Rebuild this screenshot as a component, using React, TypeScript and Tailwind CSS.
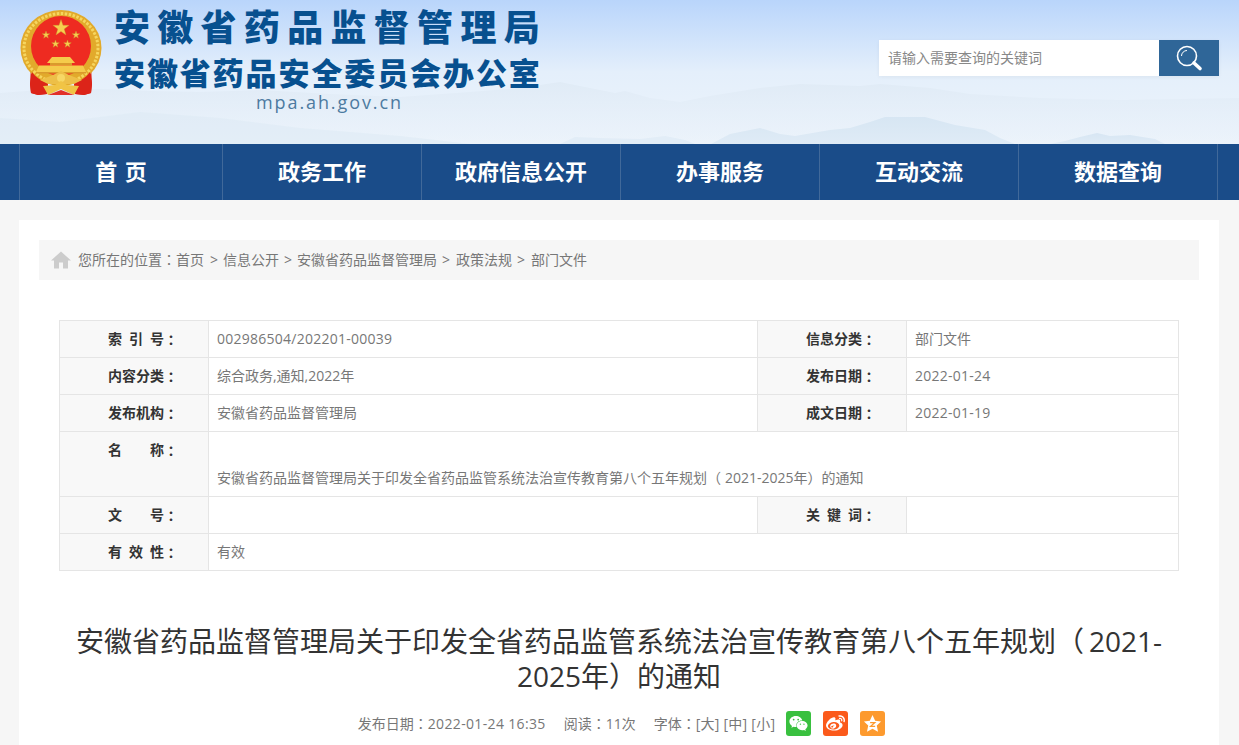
import React from 'react';
import { FaWeibo, FaWeixin } from 'react-icons/fa';

const NAV_ITEMS = [
  { label: '首 页', width: 'w-[203px]' },
  { label: '政务工作', width: 'w-[199px]' },
  { label: '政府信息公开', width: 'w-[199px]' },
  { label: '办事服务', width: 'w-[199px]' },
  { label: '互动交流', width: 'w-[199px]' },
  { label: '数据查询', width: 'w-[199px]' },
];

// full-width colon sits centered in its cell in the reference, TC glyph does that
function Colon() {
  return <span className='[font-family:"Noto_Sans_CJK_TC",sans-serif]'>：</span>;
}

function Star({ cx, cy, r }: { cx: number; cy: number; r: number }) {
  const pts: string[] = [];
  for (let i = 0; i < 10; i++) {
    const rad = i % 2 === 0 ? r : r * 0.4;
    const a = (Math.PI / 5) * i - Math.PI / 2;
    pts.push(`${cx + rad * Math.cos(a)},${cy + rad * Math.sin(a)}`);
  }
  return <polygon points={pts.join(' ')} fill="#f7cf4f" stroke="#c9962a" strokeWidth="0.4" />;
}

// National emblem, simplified
function Emblem() {
  return (
    <svg width="82" height="86" viewBox="0 0 82 86" className="shrink-0">
      {/* drapes */}
      <path d="M11 56 C14 64 20 68 28 71 L27 84 L18 85 L11 83 L10 74 Z" fill="#dc2419" />
      <path d="M71 56 C68 64 62 68 54 71 L55 84 L64 85 L71 83 L72 74 Z" fill="#dc2419" />
      <ellipse cx="41" cy="38" rx="40.5" ry="38" fill="#e2aa2b" />
      <ellipse cx="41" cy="38" rx="37" ry="34.5" fill="none" stroke="#f6d65f" strokeWidth="3" strokeDasharray="2.5 1.5" />
      <ellipse cx="41" cy="36" rx="30" ry="30" fill="#ee2b21" />
      <path d="M12 62 C16 68 22 71 28 73 L27 84 L18 85 L11 83 L10 74 Z" fill="#dc2419" />
      <path d="M70 62 C66 68 60 71 54 73 L55 84 L64 85 L71 83 L72 74 Z" fill="#dc2419" />
      {/* gate */}
      <path d="M32 47 L50 47 L55 53 L27 53 Z" fill="#f5cb4b" />
      <rect x="30" y="53" width="22" height="2.5" fill="#d99b2c" />
      <path d="M19 55.5 L63 55.5 L66 62 L16 62 Z" fill="#f5cb4b" />
      <rect x="16" y="62" width="50" height="1.5" fill="#d99b2c" />
      {/* knot and ribbon fan */}
      <path d="M20 70 L33 65 L41 61 L49 65 L62 70 L54 74 L28 74 Z" fill="#edbf48" />
      <circle cx="41" cy="68" r="4" fill="#f7d765" />
      <path d="M23 76 L35 75 L41 71 L47 75 L59 76 L54 85 L41 79 L28 85 Z" fill="#f1c445" />
      <path d="M28 85 L41 80 L54 85 Z" fill="#e2312a" />
      <Star cx={41} cy={18} r={8.5} />
      <Star cx={26} cy={25} r={4} />
      <Star cx={56} cy={25} r={4} />
      <Star cx={35.5} cy={34} r={4} />
      <Star cx={47.5} cy={34} r={4} />
    </svg>
  );
}

function Mountains() {
  return (
    <svg width="1239" height="144" viewBox="0 0 1239 144" className="absolute inset-0 pointer-events-none">
      <defs>
        <linearGradient id="far" x1="0" y1="0" x2="0" y2="1">
          <stop offset="0" stopColor="#e0ebf6" />
          <stop offset="1" stopColor="#e9f1fa" stopOpacity="0.3" />
        </linearGradient>
        <linearGradient id="near" x1="0" y1="0" x2="0" y2="1">
          <stop offset="0" stopColor="#d7e6f3" />
          <stop offset="1" stopColor="#dfebf6" />
        </linearGradient>
      </defs>
      <path
        d="M0 93 L40 90 L100 89 L150 91 L200 92 L260 90 L330 94 L400 97 L470 92 L520 88 L560 82 L590 88 L615 93 L625 91 L650 98 L680 102 L710 96 L760 88 L800 84 L860 86 L880 84 L930 88 L970 94 L1040 98 L1120 100 L1239 98 L1239 144 L0 144 Z"
        fill="url(#far)"
      />
      <path d="M0 118 L60 122 L140 112 L220 118 L300 128 L400 136 L470 144 L0 144 Z" fill="#dce9f4" fillOpacity="0.55" />
      <path d="M560 144 L575 137 L600 138 L640 139 L665 136 L685 140 L695 144 Z" fill="#e2edf7" />
      <path
        d="M711 144 L730 134 L760 128 L780 134 L795 136 L830 130 L850 128 L870 122 L885 117 L925 117 L955 125 L985 130 L1000 138 L1015 144 Z"
        fill="url(#near)"
      />
      <path d="M1050 144 L1065 141 L1080 137 L1097 133 L1110 136 L1130 135 L1155 139 L1165 144 Z" fill="url(#near)" />
    </svg>
  );
}

function Header() {
  return (
    <header className="relative h-[144px] bg-gradient-to-b from-[#b9d5fb] via-[#e4effb] to-[#edf4fb] overflow-hidden">
      <Mountains />
      <div className="relative flex justify-between pl-[20px] pr-[20px]">
        <div className="flex items-start pt-[10px]">
          <Emblem />
          <div className="ml-[12px] -mt-[2px] flex flex-col items-start text-[#07508f]">
            <div className="h-[40px] text-[36px] leading-[40px] font-black tracking-[7.3px] whitespace-nowrap">
              安徽省药品监督管理局
            </div>
            <div className="mt-[6px] h-[38px] text-[31px] leading-[38px] font-black tracking-[1.9px] whitespace-nowrap">
              安徽省药品安全委员会办公室
            </div>
            <div className="-mt-[2px] ml-[142px] text-[18px] leading-[24px] tracking-[1.9px] text-[#4c7aa0]">
              mpa.ah.gov.cn
            </div>
          </div>
        </div>
        <div className="flex h-[36px] mt-[40px] shadow-[0_1px_4px_rgba(0,0,0,0.05)]">
          <div className="w-[280px] bg-white pl-[9px] text-[14px] leading-[35px] text-[#888888]">
            请输入需要查询的关键词
          </div>
          <div className="w-[60px] bg-[#2f6698] flex items-center justify-center">
            <svg width="28" height="28" viewBox="0 0 28 28" fill="none">
              <circle cx="12" cy="12" r="9.5" stroke="#fff" strokeWidth="1.6" />
              <path d="M6.5 12a5.5 5.5 0 0 1 5.5-5.5" stroke="#fff" strokeWidth="1" />
              <path d="M19 19 L25 24.5" stroke="#fff" strokeWidth="3.6" strokeLinecap="round" />
            </svg>
          </div>
        </div>
      </div>
    </header>
  );
}

function Nav() {
  return (
    <nav className="h-[56px] bg-[#1a4c89] pl-[19px]">
      <div className="flex h-full w-[1199px] border-r border-[#41699a]">
        {NAV_ITEMS.map((item) => (
          <div
            key={item.label}
            className={`${item.width} border-l border-[#41699a] text-center text-[22px] leading-[54px] font-bold text-white whitespace-pre [word-spacing:2px]`}
          >
            {item.label}
          </div>
        ))}
      </div>
    </nav>
  );
}

function Breadcrumb() {
  return (
    <div className="h-[40px] bg-[#f6f6f6] flex items-center pl-[12px] pb-[2px] text-[14px] text-[#777777]">
      <svg width="20" height="18" viewBox="0 0 20 18" className="mr-[7px] mt-[2px]">
        <path d="M10 0.5 L20 9.5 L17 9.5 L17 17.5 L12 17.5 L12 11.5 L8 11.5 L8 17.5 L3 17.5 L3 9.5 L0 9.5 Z" fill="#cccccc" />
      </svg>
      <span>
        您所在的位置
        <Colon />
        首页
      </span>
      <span className="ml-[6px] mr-[5px]">&gt;</span>
      <span>信息公开</span>
      <span className="mx-[5px]">&gt;</span>
      <span>安徽省药品监督管理局</span>
      <span className="ml-[5px] mr-[6px]">&gt;</span>
      <span>政策法规</span>
      <span className="ml-[5px] mr-[6px]">&gt;</span>
      <span>部门文件</span>
    </div>
  );
}

// label chars are spread over a fixed 56px, colon follows
function Label({ chars }: { chars: string[] }) {
  return (
    <td className="w-[149px] bg-[#f8f8f8] border border-[#e5e5e5] pl-[48px] align-top pt-[8px] text-[14px] leading-[20px] font-bold text-[#333333]">
      <div className="flex">
        <div className="w-[56px] flex justify-between">
          {chars.map((c, i) => (
            <span key={i}>{c}</span>
          ))}
        </div>
        <Colon />
      </div>
    </td>
  );
}

function Value({ children, colSpan, wide }: { children?: React.ReactNode; colSpan?: number; wide?: string }) {
  return (
    <td
      colSpan={colSpan}
      className={`${wide ?? ''} border border-[#e5e5e5] pl-[8px] align-top pt-[8px] text-[14px] leading-[20px] text-[#777777]`}
    >
      {children}
    </td>
  );
}

// digits run a bit wider than Open Sans in the reference
function Num({ children }: { children: React.ReactNode }) {
  return <span className="tracking-[0.25px]">{children}</span>;
}

function InfoTable() {
  return (
    <table className="w-[1120px] table-fixed border-collapse">
      <tbody>
        <tr className="h-[37px]">
          <Label chars={['索', '引', '号']} />
          <Value wide="w-[549px]">
            <Num>002986504/202201-00039</Num>
          </Value>
          <Label chars={['信', '息', '分', '类']} />
          <Value>部门文件</Value>
        </tr>
        <tr className="h-[37px]">
          <Label chars={['内', '容', '分', '类']} />
          <Value>综合政务,通知,2022年</Value>
          <Label chars={['发', '布', '日', '期']} />
          <Value>
            <Num>2022-01-24</Num>
          </Value>
        </tr>
        <tr className="h-[37px]">
          <Label chars={['发', '布', '机', '构']} />
          <Value>安徽省药品监督管理局</Value>
          <Label chars={['成', '文', '日', '期']} />
          <Value>
            <Num>2022-01-19</Num>
          </Value>
        </tr>
        <tr className="h-[65px]">
          <Label chars={['名', '称']} />
          <Value colSpan={3}>
            <div className="pt-[28px] [text-spacing-trim:space-all]">
              安徽省药品监督管理局关于印发全省药品监管系统法治宣传教育第八个五年规划
              <span className="mr-[4px]">（</span>2021-2025年）的通知
            </div>
          </Value>
        </tr>
        <tr className="h-[37px]">
          <Label chars={['文', '号']} />
          <Value />
          <Label chars={['关', '键', '词']} />
          <Value />
        </tr>
        <tr className="h-[37px]">
          <Label chars={['有', '效', '性']} />
          <Value colSpan={3}>有效</Value>
        </tr>
      </tbody>
    </table>
  );
}

function ShareIcons() {
  return (
    <div className="flex gap-[12px] ml-[11px]">
      <div className="w-[25px] h-[25px] rounded-[3px] bg-[#39c03f] flex items-center justify-center text-white">
        <FaWeixin size={19} />
      </div>
      <div className="w-[25px] h-[25px] rounded-[3px] bg-[#fb5a1b] flex items-center justify-center text-white">
        <FaWeibo size={19} />
      </div>
      <div className="w-[25px] h-[25px] rounded-[3px] bg-[#fd9a2e] flex items-center justify-center">
        <svg width="19" height="19" viewBox="0 0 20 20">
          <polygon points="10,1 12.8,7 19,7.8 14.5,12.2 15.8,18.8 10,15.6 4.2,18.8 5.5,12.2 1,7.8 7.2,7" fill="#fff" />
          <path d="M7.5 9 L12.5 9 L8 13 L12.8 13" stroke="#fd9a2e" strokeWidth="1.3" fill="none" />
        </svg>
      </div>
    </div>
  );
}

export default function App() {
  return (
    <div className='h-[745px] overflow-hidden bg-[#f6f6f6] [font-family:"Open_Sans","Noto_Sans_CJK_SC",sans-serif]'>
      <Header />
      <Nav />
      <main className="ml-[19px] mt-[20px] w-[1200px] h-[600px] bg-white px-[20px] pt-[20px]">
        <Breadcrumb />
        <div className="px-[20px] pt-[40px]">
          <InfoTable />
          <h1 className="mt-[53px] text-center text-[28px] leading-[35px] font-normal text-[#333333] [text-spacing-trim:space-all]">
            安徽省药品监督管理局关于印发全省药品监管系统法治宣传教育第八个五年规划
            <span className="mr-[5px]">（</span>2021-2025年）的通知
          </h1>
          <div className="mt-[17px] pl-[5px] flex items-center justify-center text-[14px] text-[#777777]">
            <span>
              发布日期
              <Colon />
              <span className="tracking-[0.35px]">2022-01-24 16:35</span>
            </span>
            <span className="ml-[18px]">
              阅读
              <Colon />
              11次
            </span>
            <span className="ml-[18px]">
              字体
              <Colon />
              <span className="tracking-[0.25px]">[大] [中] [小]</span>
            </span>
            <ShareIcons />
          </div>
        </div>
      </main>
    </div>
  );
}
